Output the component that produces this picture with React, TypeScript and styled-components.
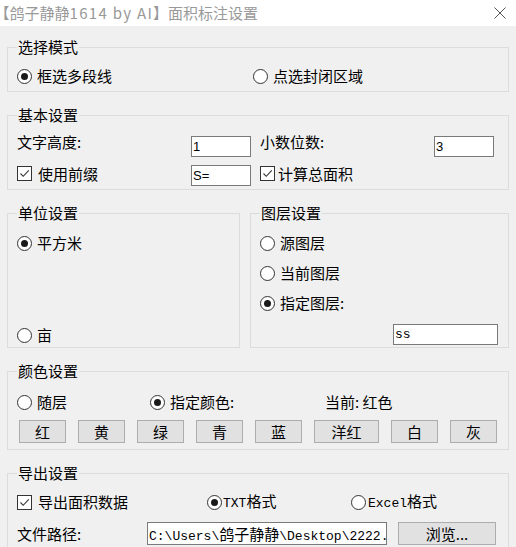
import React from "react";
import styled, { createGlobalStyle } from "styled-components";

const GlobalStyle = createGlobalStyle`
  html, body { margin: 0; padding: 0; background: #f0f0f0; overflow: hidden; }
  body {
    font-family: "Noto Sans CJK SC", "Noto Sans", sans-serif;
    font-size: 15px;
    color: #000;
  }
  * { box-sizing: border-box; }
`;

const Window = styled.div`
  width: 516px;
  height: 547px;
  overflow: hidden;
  background: #f0f0f0;
  display: flex;
  flex-direction: column;
`;

const TitleBar = styled.div`
  height: 26px;
  flex: none;
  background: #fff;
  display: flex;
  align-items: center;
  justify-content: space-between;
  padding: 0 9px 0 2px;
`;

const TitleText = styled.span`
  color: #999;
  font-size: 15px;
  line-height: 20px;
  white-space: nowrap;
`;

const HalfBracket = styled.span`
  font-feature-settings: "halt";
`;

const TitleLatin = styled.span`
  letter-spacing: 1.3px;
`;

const CloseButton = styled.button`
  width: 14px;
  height: 14px;
  padding: 0;
  border: 0;
  background: transparent;
  display: flex;
  align-items: center;
  justify-content: center;
`;

const Content = styled.div`
  display: flex;
  flex-direction: column;
  gap: 15px;
  padding: 13px 7px 0 7px;
`;

const Group = styled.fieldset<{ $pt: number; $pb: number }>`
  margin: 0;
  min-width: 0;
  border: 1px solid #dcdcdc;
  padding: ${(p) => p.$pt}px 8px ${(p) => p.$pb}px 9px;
  display: flex;
  flex-direction: column;
`;

const Legend = styled.legend`
  padding: 0 1px;
  margin: 0;
  font-size: 15px;
  line-height: 16px;
`;

const ChoiceLabel = styled.label<{ $gap: number }>`
  display: inline-flex;
  align-items: center;
  gap: ${(p) => p.$gap}px;
  height: 20px;
  line-height: 20px;
  white-space: nowrap;
`;

const RadioCircle = styled.span<{ $checked: boolean }>`
  width: 15px;
  height: 15px;
  flex: none;
  border-radius: 50%;
  border: 1px solid #333;
  background: #fff;
  display: flex;
  align-items: center;
  justify-content: center;
  &::after {
    content: "";
    width: 7px;
    height: 7px;
    border-radius: 50%;
    background: ${(p) => (p.$checked ? "#1a1a1a" : "transparent")};
  }
`;

const CheckBox = styled.span`
  width: 15px;
  height: 15px;
  flex: none;
  border: 1px solid #333;
  background: #fff;
  display: flex;
  align-items: center;
  justify-content: center;
`;

const Mono = styled.span`
  font-family: "Liberation Mono", monospace;
  font-size: 13px;
`;

const Radio = ({
  checked = false,
  gap = 5,
  children,
}: {
  checked?: boolean;
  gap?: number;
  children: React.ReactNode;
}) => (
  <ChoiceLabel $gap={gap}>
    <RadioCircle $checked={checked} />
    <span>{children}</span>
  </ChoiceLabel>
);

const Check = ({ gap = 6, children }: { gap?: number; children: React.ReactNode }) => (
  <ChoiceLabel $gap={gap}>
    <CheckBox>
      <svg width="13" height="13" viewBox="0 0 13 13">
        <polyline points="2.5,6.5 5.2,9.3 10.8,3.4" fill="none" stroke="#333" strokeWidth="1.1" />
      </svg>
    </CheckBox>
    <span>{children}</span>
  </ChoiceLabel>
);

/* Group 1 */
const ModeRow = styled.div`
  display: grid;
  grid-template-columns: 236px auto;
  height: 20px;
`;

/* Group 2 */
const BasicGrid = styled.div`
  display: grid;
  grid-template-columns: 174px 69px 174px 60px;
  grid-template-rows: 21px 21px;
  row-gap: 8px;
  align-items: start;
`;

const FieldLabel = styled.span`
  line-height: 20px;
  margin-top: -4px;
  white-space: nowrap;
`;

const CheckCell = styled.div`
  margin-top: -2px;
`;

const TextInput = styled.input<{ $w: number; $mono?: boolean }>`
  width: ${(p) => p.$w}px;
  height: 21px;
  margin: 0;
  padding: 0 1px;
  border: 1px solid #7a7a7a;
  background: #fff;
  color: #000;
  outline: none;
  font-family: ${(p) => (p.$mono ? '"Liberation Mono", monospace' : '"Liberation Sans", sans-serif')};
  font-size: 13px;
  line-height: 19px;
`;

/* Group 3 */
const SplitRow = styled.div`
  display: grid;
  grid-template-columns: 233px 259px;
  column-gap: 10px;
`;

const UnitColumn = styled.div`
  flex: 1;
  display: flex;
  flex-direction: column;
  justify-content: space-between;
`;

const LayerColumn = styled.div`
  display: flex;
  flex-direction: column;
  gap: 10px;
`;

const LayerInputRow = styled.div`
  display: flex;
  justify-content: flex-end;
  padding-right: 2px;
  margin-top: 1px;
`;

/* Group 4 */
const ColorModeRow = styled.div`
  display: grid;
  grid-template-columns: 133px 175px auto;
  height: 20px;
  align-items: center;
`;

const PlainText = styled.span`
  line-height: 20px;
  white-space: nowrap;
`;

const ButtonRow = styled.div`
  display: flex;
  gap: 12px;
  margin: 8px 0 0 2px;
`;

const WinButton = styled.button<{ $w: number }>`
  width: ${(p) => p.$w}px;
  height: 23px;
  margin: 0;
  padding: 0;
  border: 1px solid #adadad;
  background: #e1e1e1;
  color: #000;
  font-family: "Noto Sans CJK SC", "Noto Sans", sans-serif;
  font-size: 15px;
  line-height: 21px;
`;

/* Group 5 */
const ExportRow = styled.div`
  display: grid;
  grid-template-columns: 190px 144px auto;
  height: 20px;
`;

const PathRow = styled.div`
  display: grid;
  grid-template-columns: 119px 240px 98px;
  column-gap: 11px;
  align-items: center;
  margin-top: 10px;
`;

const PathBox = styled.div`
  height: 23px;
  border: 1px solid #7a7a7a;
  background: #fff;
  padding: 0 1px;
  overflow: hidden;
  white-space: nowrap;
  line-height: 21px;
  font-family: "Liberation Mono", monospace;
  font-size: 13px;
`;

const PathCjk = styled.span`
  font-family: "Noto Sans CJK SC", sans-serif;
  font-size: 15px;
`;

const colorButtons: { label: string; w: number }[] = [
  { label: "红", w: 47 },
  { label: "黄", w: 47 },
  { label: "绿", w: 47 },
  { label: "青", w: 47 },
  { label: "蓝", w: 47 },
  { label: "洋红", w: 65 },
  { label: "白", w: 47 },
  { label: "灰", w: 47 },
];

export default function App() {
  return (
    <>
      <GlobalStyle />
      <Window>
        <TitleBar>
          <TitleText>
            <HalfBracket>【</HalfBracket>鸽子静静<TitleLatin>1614 by AI</TitleLatin>】面积标注设置
          </TitleText>
          <CloseButton aria-label="关闭">
            <svg width="12" height="12" viewBox="0 0 12 12">
              <path d="M0.5 0.5 L11.5 11.5 M11.5 0.5 L0.5 11.5" stroke="#555" strokeWidth="1" />
            </svg>
          </CloseButton>
        </TitleBar>

        <Content>
          <Group $pt={11} $pb={5}>
            <Legend>选择模式</Legend>
            <ModeRow>
              <Radio checked>框选多段线</Radio>
              <Radio>点选封闭区域</Radio>
            </ModeRow>
          </Group>

          <Group $pt={13} $pb={3}>
            <Legend>基本设置</Legend>
            <BasicGrid>
              <FieldLabel>文字高度:</FieldLabel>
              <TextInput $w={60} defaultValue="1" />
              <FieldLabel>小数位数:</FieldLabel>
              <TextInput $w={60} defaultValue="3" />
              <CheckCell>
                <Check>使用前缀</Check>
              </CheckCell>
              <TextInput $w={60} defaultValue="S=" />
              <CheckCell>
                <Check gap={3}>计算总面积</Check>
              </CheckCell>
              <span />
            </BasicGrid>
          </Group>

          <SplitRow>
            <Group $pt={12} $pb={2}>
              <Legend>单位设置</Legend>
              <UnitColumn>
                <Radio checked>平方米</Radio>
                <Radio>亩</Radio>
              </UnitColumn>
            </Group>
            <Group $pt={12} $pb={2}>
              <Legend>图层设置</Legend>
              <LayerColumn>
                <Radio>源图层</Radio>
                <Radio>当前图层</Radio>
                <Radio checked>指定图层:</Radio>
                <LayerInputRow>
                  <TextInput $w={105} $mono defaultValue="ss" />
                </LayerInputRow>
              </LayerColumn>
            </Group>
          </SplitRow>

          <Group $pt={13} $pb={6}>
            <Legend>颜色设置</Legend>
            <ColorModeRow>
              <Radio>随层</Radio>
              <Radio checked>指定颜色:</Radio>
              <PlainText>当前: 红色</PlainText>
            </ColorModeRow>
            <ButtonRow>
              {colorButtons.map((b) => (
                <WinButton key={b.label} $w={b.w}>
                  {b.label}
                </WinButton>
              ))}
            </ButtonRow>
          </Group>

          <Group $pt={11} $pb={6}>
            <Legend>导出设置</Legend>
            <ExportRow>
              <Check>导出面积数据</Check>
              <Radio checked gap={1}>
                <Mono>TXT</Mono>格式
              </Radio>
              <Radio gap={2}>
                <Mono>Excel</Mono>格式
              </Radio>
            </ExportRow>
            <PathRow>
              <PlainText>文件路径:</PlainText>
              <PathBox>
                C:\Users\<PathCjk>鸽子静静</PathCjk>\Desktop\2222.txt
              </PathBox>
              <WinButton $w={98}>浏览...</WinButton>
            </PathRow>
          </Group>
        </Content>
      </Window>
    </>
  );
}
